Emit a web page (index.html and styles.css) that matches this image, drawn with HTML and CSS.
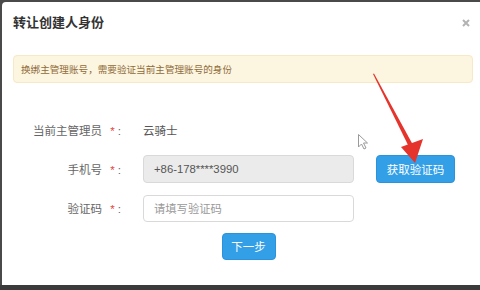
FILE: index.html
```html
<!DOCTYPE html>
<html lang="zh">
<head>
<meta charset="utf-8">
<link rel="stylesheet" href="styles.css">
</head>
<body>
<div class="dialog">
  <div class="header">
    <h1 class="title">转让创建人身份</h1>
    <svg class="close" width="8" height="8" viewBox="0 0 8 8"><path d="M1 1L7 7M7 1L1 7" stroke="#b3b3b3" stroke-width="2"/></svg>
  </div>
  <div class="alert">换绑主管理账号，需要验证当前主管理账号的身份</div>
  <div class="form">
    <div class="label">当前主管理员 <span class="star">*</span><span class="colon">:</span></div>
    <div class="value">云骑士</div>
    <div></div>

    <div class="label">手机号 <span class="star">*</span><span class="colon">:</span></div>
    <div class="input readonly">+86-178****3990</div>
    <button class="btn btn-code">获取验证码</button>

    <div class="label">验证码 <span class="star">*</span><span class="colon">:</span></div>
    <div class="input placeholder">请填写验证码</div>
    <div></div>

    <div></div>
    <button class="btn btn-next">下一步</button>
    <div></div>
  </div>
</div>
<div class="bottom-bar"></div>
<svg class="overlay" width="480" height="290" viewBox="0 0 480 290">
  <path d="M373 74 L374 73.5 L413 145 L409 147 Z" fill="#e5342c"/>
  <path d="M401 147 L423 139 L415 163 Z" fill="#e5342c"/>
  <path d="M358.5 134.5 L358.5 147 L361.5 144 L364 149 L366 148 L363.5 143 L367.5 143 Z" fill="#fff" stroke="#9a9a9a" stroke-width="1" stroke-linejoin="round"/>
</svg>
</body>
</html>
```
FILE: styles.css
```css
html, body {
  margin: 0;
  padding: 0;
}
body {
  width: 480px;
  height: 290px;
  background: #4a4a4a;
  overflow: hidden;
  position: relative;
  font-family: "Liberation Sans", "Noto Sans CJK SC", sans-serif;
}
.dialog {
  margin: 2px 0 0 2px;
  width: 478px;
  height: 283px;
  background: #fff;
  border-radius: 4px 0 0 0;
  box-sizing: border-box;
}
.header {
  display: flex;
  justify-content: space-between;
  align-items: center;
  padding: 13px 10px 0 11px;
  height: 29px;
  box-sizing: border-box;
}
.title {
  margin: 0;
  font-size: 13px;
  line-height: 16px;
  font-weight: bold;
  color: #333;
}
.close {
  display: block;
}
.alert {
  margin: 24px 7px 0 11px;
  height: 28px;
  box-sizing: border-box;
  border: 1px solid #f7e8c6;
  background: #fcf5e0;
  border-radius: 4px;
  padding-left: 7px;
  display: flex;
  align-items: center;
  font-size: 9.6px;
  color: #8f6b3a;
}
.form {
  margin-top: 33px;
  display: grid;
  grid-template-columns: 119px 211px 79px;
  grid-template-rows: 28px 28px 27px 27px;
  column-gap: 22px;
  row-gap: 11px;
  align-items: center;
}
.form > :nth-child(n+7) {
  margin-top: 1px;
}
.label {
  text-align: right;
  font-size: 11.5px;
  color: #666;
  white-space: nowrap;
}
.star {
  color: #e0473f;
  margin-left: 5px;
}
.colon {
  color: #666;
  margin-left: 3px;
}
.value {
  font-size: 11.5px;
  color: #555;
}
.input {
  height: 100%;
  box-sizing: border-box;
  border: 1px solid #d9d9d9;
  border-radius: 4px;
  display: flex;
  align-items: center;
  padding-left: 10px;
  font-size: 11.3px;
}
.readonly {
  background: #ebebeb;
  color: #555;
}
.placeholder {
  background: #fff;
  color: #999;
}
.btn {
  height: 100%;
  box-sizing: border-box;
  border: 1px solid #2b92dc;
  background: #339fe7;
  color: #fff;
  border-radius: 4px;
  font-family: "Liberation Sans", "Noto Sans CJK SC", sans-serif;
  font-size: 11.5px;
  padding: 0;
}
.btn-code {
  width: 79px;
}
.btn-next {
  width: 54px;
  justify-self: center;
}
.bottom-bar {
  height: 5px;
  background: #3b3b3b;
}
.overlay {
  position: absolute;
  left: 0;
  top: 0;
  pointer-events: none;
}
```
